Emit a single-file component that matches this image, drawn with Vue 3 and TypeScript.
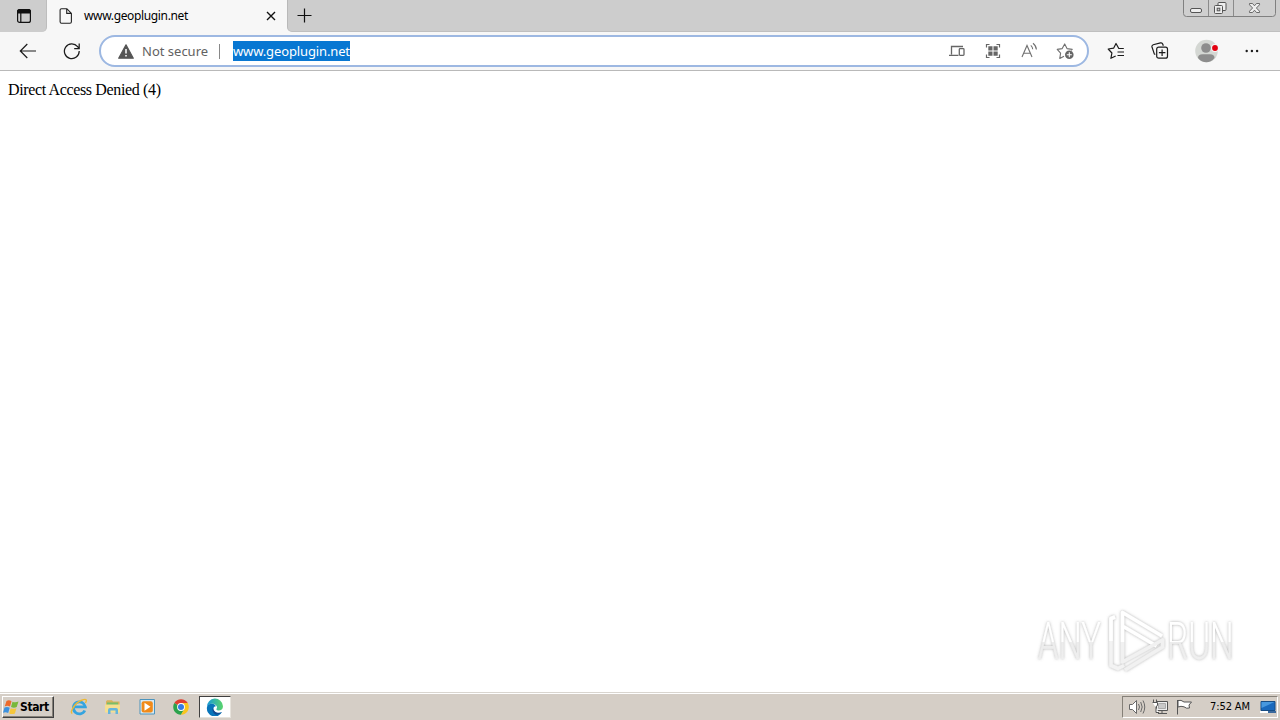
<script setup lang="ts">
import { ref } from 'vue'

const host = ref('www.geoplugin.net')
const message = ref('Direct Access Denied (4)')
const clock = ref('7:52 AM')
</script>

<template>
  <div class="screen">
    <header class="tabstrip">
      <div class="tab-actions">
        <svg width="16" height="16" viewBox="0 0 16 16" fill="none" stroke="#111" stroke-width="1.2">
          <rect x="1.6" y="1.6" width="12.8" height="12.8" rx="2" />
          <path d="M1.6 5V3.5a2 2 0 0 1 2-2h8.8a2 2 0 0 1 2 2V5z" fill="#111" />
          <path d="M4.8 5v9" />
        </svg>
      </div>
      <div class="tab">
        <svg class="page-icon" width="14" height="16" viewBox="0 0 14 16" fill="none" stroke="#222" stroke-width="1.1" stroke-linejoin="round">
          <path d="M2.5.7h5.2l4.7 4.7v8.4a1.4 1.4 0 0 1-1.4 1.4H2.5a1.4 1.4 0 0 1-1.4-1.4V2.1A1.4 1.4 0 0 1 2.5.7zM7.7.7v4.7h4.7" />
        </svg>
        <span class="tab-title">{{ host }}</span>
        <svg class="close" width="10" height="10" viewBox="0 0 10 10" stroke="#111" stroke-width="1.35">
          <path d="M1 1l8 8M9 1L1 9" />
        </svg>
      </div>
      <div class="strip-rest">
        <svg class="plus" width="15" height="15" viewBox="0 0 15 15" stroke="#111" stroke-width="1.2">
          <path d="M7.5.5v14M.5 7.5h14" />
        </svg>
        <svg class="window-buttons" width="94" height="18" viewBox="0 0 94 18" fill="none">
          <path d="M.5 0v13.5a3 3 0 0 0 3 3h86a3 3 0 0 0 3-3V0" fill="#cfcfcf" stroke="#808080" />
          <path d="M25.5 0v16M50.5 0v16" stroke="#8b8b8b" />
          <rect x="7.5" y="8.5" width="11" height="4" rx="1.5" fill="#eee" stroke="#555" />
          <rect x="35" y="2.5" width="8" height="8" rx="1" fill="#eee" stroke="#555" />
          <rect x="31.5" y="5.5" width="8" height="8" rx="1" fill="#eee" stroke="#555" />
          <rect x="34.2" y="8.2" width="2.6" height="2.6" fill="#ccc" stroke="#555" />
          <path d="M66.5 3.5h3l2 2.3 2-2.3h3v1.3l-3.100 3.200 3.100 3.200v1.300h-3l-2-2.300-2 2.300h-3v-1.300L69.600 8l-3.100-3.200z" fill="#eee" stroke="#5c5c5c" stroke-width=".9" />
        </svg>
      </div>
    </header>

    <nav class="toolbar">
      <svg class="back" width="18" height="18" viewBox="0 0 18 18" fill="none" stroke="#1c1c1c" stroke-width="1.2">
        <path d="M17 9H1.5M8.3 2L1.3 9l7 7" />
      </svg>
      <svg class="reload" width="18" height="18" viewBox="0 0 18 18" fill="none" stroke="#1c1c1c" stroke-width="1.25">
        <path d="M16.2 9A7.4 7.4 0 1 1 14.6 4.6L16 6.3M16.2 1.5v5h-5" />
      </svg>
      <div class="address">
        <svg class="warning" width="16" height="15" viewBox="0 0 16 15">
          <path d="M8 .8l7.3 13.4H.7z" fill="#555" stroke="#555" stroke-width="1.2" stroke-linejoin="round" />
          <path d="M8 5v4.5M8 11v1.6" stroke="#fff" stroke-width="1.5" />
        </svg>
        <span class="security">Not secure</span>
        <span class="divider"></span>
        <span class="url">{{ host }}</span>
        <div class="address-icons">
          <svg width="18" height="18" viewBox="0 0 18 18" fill="none" stroke="#666" stroke-width="1.3">
            <path d="M3.5 12.5V4.5h11.500M1 13.300h9.500" />
            <rect x="11.3" y="6.6" width="4.7" height="6.8" rx=".8" />
          </svg>
          <svg width="18" height="18" viewBox="0 0 18 18" fill="none" stroke="#666" stroke-width="1.2">
            <path d="M2.5 5.5v-3h3M12.5 2.5h3v3M15.5 12.5v3h-3M5.5 15.5h-3v-3" />
            <path d="M4.3 4.3h4.2v4.2H4.3zM9.5 4.3h4.2v4.2H9.5zM4.3 9.5h4.2v4.2H4.3zM9.5 9.5h4.2v4.2H9.5z" fill="#666" stroke="none" />
          </svg>
          <svg width="18" height="18" viewBox="0 0 18 18" fill="none" stroke="#707070" stroke-width="1.1">
            <path d="M2 15L7 3.500 12 15M3.700 11.200h6.700M10.800 3.300q1.800 1.500 1.900 4M13 1.200q3.200 2.500 3.400 6.300" />
          </svg>
          <svg width="20" height="18" viewBox="0 0 20 18" fill="none" stroke="#707070" stroke-width="1.1" stroke-linejoin="round">
            <path d="M8 14.200l-4.200 2.200.8-5.200L1.200 7.400l5-.8L8.700 1.900 11 6.600l5.200.8-1 1" />
            <circle cx="13.3" cy="12.7" r="4.3" fill="#666" stroke="none" />
            <path d="M13.3 10.2v5M10.8 12.7h5" stroke="#fff" />
          </svg>
        </div>
      </div>
      <svg class="favorites" width="18" height="18" viewBox="0 0 18 18" fill="none" stroke="#1b1b1b" stroke-width="1.2" stroke-linejoin="round">
        <path d="M16.8 6.500h-5L9 1.500 6.600 6.200 1.200 7l3.700 4-1 5.300L8.700 14M10.500 10h6.500M10.500 13.500h6.500" />
      </svg>
      <svg class="collections" width="18" height="18" viewBox="0 0 18 18" fill="none" stroke="#1b1b1b" stroke-width="1.2">
        <path d="M4.3 12.500l-1-.6L1 5a2 2 0 0 1 1.200-2.300L9.500.9a2 2 0 0 1 2.300 1.300l.5 1.500" />
        <rect x="5.7" y="5.2" width="10.8" height="11" rx="2" />
        <path d="M11.1 7.500v6.500M7.900 10.700h6.500" />
      </svg>
      <svg class="profile" width="24" height="24" viewBox="0 0 24 24">
        <circle cx="11.5" cy="12" r="11.3" fill="#d4d7d3" />
        <circle cx="11" cy="9" r="4.8" fill="#8d8d8d" />
        <path d="M3 19q0-3.700 4.500-3.700h7.500q4.500 0 4.500 3.700-3.500 4.300-8.200 4.300T3 19z" fill="#8d8d8d" />
        <circle cx="20" cy="9" r="4" fill="#f5f5f5" />
        <circle cx="20" cy="9" r="2.9" fill="#e3000f" />
      </svg>
      <svg class="more" width="14" height="4" viewBox="0 0 14 4" fill="#1c1c1c">
        <circle cx="1.7" cy="2" r="1.2" /><circle cx="6.9" cy="2" r="1.2" /><circle cx="12.1" cy="2" r="1.2" />
      </svg>
    </nav>

    <main class="page">
      <span class="message">{{ message }}</span>
      <svg class="watermark" width="220" height="76" viewBox="0 0 220 76">
        <defs>
          <linearGradient id="mark-fade" gradientUnits="userSpaceOnUse" x1="0" y1="16" x2="0" y2="54">
            <stop offset="0" stop-color="#fff" />
            <stop offset=".52" stop-color="#fff" />
            <stop offset=".54" stop-color="#ececec" />
            <stop offset="1" stop-color="#efefef" />
          </linearGradient>
          <filter id="mark-shadow" x="-10%" y="-20%" width="120%" height="140%">
            <feDropShadow dx="0" dy="0" stdDeviation="1.8" flood-color="#777" flood-opacity=".6" />
          </filter>
        </defs>
        <g filter="url(#mark-shadow)">
          <g class="mark-text" fill="url(#mark-fade)">
            <text transform="translate(7) scale(.63 1)" y="53">ANY</text>
            <text transform="translate(136) scale(.64 1)" y="53">RUN</text>
          </g>
          <g fill="none" stroke-width="3.6" stroke-linejoin="round">
            <path d="M84 11l-4 1.500v47l7 3 6-3" stroke="#f3f3f3" />
            <path d="M80 35V12.500l4-1.500" stroke="#fff" />
            <path d="M91.500 36V6.500L131 30M91.500 20l34 20" stroke="#fff" />
            <path d="M91.500 36v20l40-22v7L94 64" stroke="#f1f1f1" />
          </g>
        </g>
      </svg>
    </main>

    <footer class="taskbar">
      <div class="start">
        <svg width="17" height="17" viewBox="0 0 17 17">
          <path d="M3.500 2Q6 .6 8.500 2.200L7 7.500Q4.500 6 1.800 7.300z" fill="#ed6a2c" />
          <path d="M9.500 2.700Q12 4 15.500 2.600L13.700 8Q11 9.300 8 8z" fill="#78b83b" />
          <path d="M1.500 8.500Q4.200 7.200 6.700 8.700L5.200 14Q2.700 12.500 0 13.700z" fill="#3c91df" />
          <path d="M7.700 9.200Q10.500 10.500 13.400 9.200l-1.500 5.200Q9 15.800 6.200 14.400z" fill="#f5c63b" />
        </svg>
        <span>Start</span>
      </div>
      <div class="launchers">
        <svg width="18" height="18" viewBox="0 0 18 18" fill="none">
          <path d="M14.800 12.500A6 6 0 1 1 15.300 8.800H5" stroke="#35a4df" stroke-width="2.8" />
          <path d="M2.300 15.500C-1 14.500 5 5 11 2.500s6-.5 4.500 2.500" stroke="#edb934" stroke-width="1.4" />
        </svg>
        <svg width="18" height="18" viewBox="0 0 18 18">
          <path d="M2 3.500l1-1.300h5l1 1.300h6.500V14H2z" fill="#d8b25a" />
          <path d="M3 4.500h11V8H3z" fill="#79bd69" />
          <path d="M1 6.500h15v8H1z" fill="#f5df91" />
          <path d="M4 16v-4q0-2 2-2h6q2 0 2 2v4h-2.500v-3.500h-5V16z" fill="#65b5dc" />
        </svg>
        <svg width="18" height="18" viewBox="0 0 18 18">
          <path d="M2 1.500h14.500v14.500H2z" fill="#d7e9f4" stroke="#4c94bd" />
          <rect x="3.6" y="3.2" width="11.2" height="11.2" rx="2" fill="#f18a19" />
          <path d="M6.500 4.800l6 4-6 4z" fill="#fff" />
        </svg>
        <svg width="18" height="18" viewBox="0 0 18 18">
          <path d="M9 9L2.250 5.100A7.800 7.800 0 0 1 15.750 5.100z" fill="#df3e30" />
          <path d="M9 9L2.250 5.100A7.800 7.800 0 0 0 9 16.800l3.400-5.900z" fill="#2ba24c" />
          <path d="M9 5.100h6.750A7.800 7.800 0 0 1 9 16.800l3.400-5.900z" fill="#f9c51d" />
          <circle cx="9" cy="9" r="3.9" fill="#fff" />
          <circle cx="9" cy="9" r="3" fill="#347be5" />
        </svg>
      </div>
      <div class="running-app">
        <svg width="18" height="18" viewBox="0 0 18 18">
          <defs>
            <linearGradient id="edge-wave" x1="0" y1="0" x2="1" y2="0">
              <stop offset="0" stop-color="#189bd8" /><stop offset="1" stop-color="#5bd56a" />
            </linearGradient>
          </defs>
          <path d="M1 9a8 8 0 0 1 16-.8c0 3-2.200 4.300-4.600 4.200-2 0-2.400-1-1.700-1.800C12 8.500 9.500 5.700 6 5.700 3.500 5.700 1.500 7 1 9z" fill="url(#edge-wave)" />
          <path d="M1 9c.3-2.300 3-3.500 5.300-3.300C8 5.900 9.800 7 9.900 8.300 7 8.500 6.500 12 9 14c2 1.500 4.700 1.200 7 .1A8 8 0 0 1 1 9z" fill="#0875ba" />
          <path d="M6.900 9.400C5.500 12.500 7.500 16 10.500 16.800A8 8 0 0 0 16 14c-5 2.300-8.500-.5-9.100-4.600z" fill="#124b91" />
        </svg>
      </div>
      <div class="tray">
        <svg class="speaker" width="18" height="16" viewBox="0 0 18 16" fill="#fff" stroke="#686868">
          <path d="M1.500 5.500h3l4-4v13l-4-4h-3z" />
          <path d="M10.500 5q2 3 0 6M12.700 3q3 5 0 10M15 1.500q3.500 6.500 0 13" fill="none" />
        </svg>
        <svg class="network" width="18" height="16" viewBox="0 0 18 16" fill="#eee" stroke="#555">
          <path d="M4.500 2.500h11v9h-11zM10 12v2M6 14.500h9" />
          <path d="M6.500 4.500h7v5h-7z" fill="#c9c9c9" stroke="#aaa" />
          <path d="M1.500.5v3M4.500.5v3M.5 3.500h5v3l-1.500 1v6h3" fill="#fff" />
        </svg>
        <svg class="flag" width="18" height="16" viewBox="0 0 18 16" fill="#fff" stroke="#555">
          <path d="M1.500 1v14.500M2 1.500q3-1 6 1.500h7.500l-2.500 3 .5 3q-3 1-5.500-1.200Q5 6.700 2 8z" />
        </svg>
        <time>{{ clock }}</time>
        <svg class="desktop" width="18" height="16" viewBox="0 0 18 16">
          <path d="M2 2.500h14v9H2z" fill="#1969bd" stroke="#174d85" />
          <path d="M2.500 3h13l-13 6z" fill="#4798df" />
          <path d="M1 13h8" stroke="#fff" stroke-width="2" /><path d="M9 13h8" stroke="#3b699d" stroke-width="2" />
        </svg>
      </div>
    </footer>
  </div>
</template>

<style>
html,
body {
  margin: 0;
  overflow: hidden;
}
</style>

<style scoped>
.screen {
  display: flex;
  flex-direction: column;
  width: 1280px;
  height: 720px;
  overflow: hidden;
  background: #fff;
  color: #000;
}
svg {
  display: block;
  flex: none;
}
.tabstrip {
  display: flex;
  flex: 0 0 32px;
  background: #f7f7f7;
}
.tab-actions {
  box-sizing: border-box;
  width: 47px;
  padding: 8px 0 0 16px;
  background: #cdcdcd;
  border-right: 1px solid #bdbdbd;
  border-radius: 0 0 5px 0;
}
.tab {
  box-sizing: border-box;
  display: flex;
  align-items: center;
  width: 240px;
  padding: 0 11px 0 12px;
  background: #f7f7f7;
  border-radius: 6px 6px 0 0;
}
.tab-title {
  margin-left: 11px;
  font: 12px/18px "Noto Sans", sans-serif;
  letter-spacing: -0.35px;
  white-space: nowrap;
}
.close {
  margin-left: auto;
}
.strip-rest {
  display: flex;
  flex: 1;
  background: #cdcdcd;
  border-left: 1px solid #b9b9b9;
  border-bottom: 1px solid #bfbfbf;
  border-radius: 0 0 0 5px;
  box-sizing: border-box;
}
.plus {
  margin: 8px 0 0 9px;
}
.window-buttons {
  margin-left: auto;
  margin-right: 3px;
}
.toolbar {
  box-sizing: border-box;
  display: flex;
  align-items: center;
  flex: 0 0 39px;
  padding-left: 19px;
  background: #f7f7f7;
  border-bottom: 1px solid #b9b9b9;
}
.reload {
  margin-left: 26px;
}
.address {
  box-sizing: border-box;
  display: flex;
  align-items: center;
  width: 990px;
  height: 32px;
  margin-left: 18px;
  padding: 0 11px 0 17px;
  background: #fff;
  border: 2px solid #9db8e2;
  border-radius: 16px;
  font: 13px/20px "Noto Sans", sans-serif;
  white-space: nowrap;
}
.security {
  width: 77px;
  margin-left: 8px;
  color: #626262;
}
.divider {
  width: 1px;
  height: 15px;
  background: #888;
}
.url {
  margin-left: 13px;
  background: #0877d2;
  color: #fff;
  letter-spacing: -0.13px;
}
.address-icons {
  display: flex;
  gap: 18px;
  margin-left: auto;
}
.favorites {
  margin-left: 18px;
}
.collections {
  margin-left: 26px;
}
.profile {
  margin-left: 26px;
}
.more {
  margin-left: 26px;
}
.page {
  position: relative;
  flex: 1;
  padding: 10px 8px;
  font: 16px/18px "Liberation Serif", serif;
}
.message {
  letter-spacing: -0.36px;
}
.watermark {
  position: absolute;
  left: 1031px;
  top: 535px;
}
.mark-text {
  font: 300 52px "Roboto", sans-serif;
}
.taskbar {
  box-sizing: border-box;
  display: flex;
  align-items: center;
  flex: 0 0 28px;
  padding: 1px 2px 0 2px;
  background: #d5cec6;
  border-top: 1px solid #d9d5cf;
  box-shadow: inset 0 1px #fff;
}
.start {
  box-sizing: border-box;
  display: flex;
  align-items: center;
  width: 52px;
  height: 22px;
  padding-left: 0;
  border: 1px solid;
  border-color: #fff #404040 #404040 #fff;
  box-shadow: inset -1px -1px #858078;
  font: bold 12px/18px "DejaVu Sans Condensed", "DejaVu Sans", sans-serif;
  letter-spacing: -0.4px;
}
.launchers {
  display: flex;
  gap: 16px;
  margin-left: 16px;
}
.running-app {
  box-sizing: border-box;
  display: flex;
  align-items: center;
  justify-content: center;
  width: 32px;
  height: 22px;
  margin-left: 9px;
  background: #fff;
  border: 1px solid;
  border-color: #404040 #e7e3dc #e7e3dc #404040;
}
.tray {
  box-sizing: border-box;
  display: flex;
  align-items: center;
  width: 156px;
  height: 22px;
  margin-left: auto;
  padding-left: 5px;
  border: 1px solid;
  border-color: #858078 #fff #fff #858078;
}
.network,
.flag {
  margin-left: 6px;
}
.tray time {
  width: 42px;
  margin-left: 16px;
  font: 11px/16px "DejaVu Sans Condensed", "DejaVu Sans", sans-serif;
  letter-spacing: -0.1px;
  white-space: nowrap;
}
.desktop {
  margin-left: 7px;
}
</style>
